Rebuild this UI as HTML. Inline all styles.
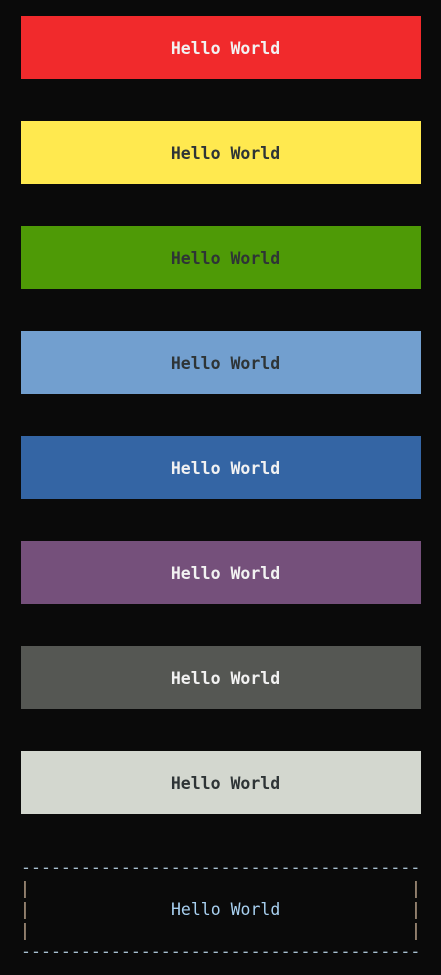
<!DOCTYPE html>
<html><head><meta charset="utf-8"><style>
html,body{margin:0;padding:0;background:#0a0a0a;width:441px;height:975px;overflow:hidden;}
.b{position:absolute;left:21px;width:400px;height:63px;box-sizing:border-box;padding-left:9px;padding-top:2px;display:flex;align-items:center;justify-content:center;font:bold 16.5px "DejaVu Sans Mono","Liberation Mono",monospace;}
.w{color:#f2f2f2}.d{color:#2e3436}
.m{position:absolute;margin:0;font:16.5px/21px "DejaVu Sans Mono","Liberation Mono",monospace;white-space:pre;}
.dash{left:21px;color:#a8c0d0;letter-spacing:0.05px}
.p{color:#c0a890}
.t{color:#a8d0f0}
</style></head><body>
<div class="b w" style="top:16px;background:#f12a2c">Hello World</div>
<div class="b d" style="top:121px;background:#ffe94f">Hello World</div>
<div class="b d" style="top:226px;background:#4e9a06">Hello World</div>
<div class="b d" style="top:331px;background:#729fcf">Hello World</div>
<div class="b w" style="top:436px;background:#3465a4">Hello World</div>
<div class="b w" style="top:541px;background:#75507b">Hello World</div>
<div class="b w" style="top:646px;background:#555753">Hello World</div>
<div class="b d" style="top:751px;background:#d3d7cf">Hello World</div>
<div class="m dash" style="top:857px">----------------------------------------</div>
<div class="m p" style="left:20px;top:878px">|<br>|<br>|</div>
<div class="m p" style="left:411px;top:878px">|<br>|<br>|</div>
<div class="m t" style="left:171px;top:899px">Hello World</div>
<div class="m dash" style="top:941px">----------------------------------------</div>
</body></html>
